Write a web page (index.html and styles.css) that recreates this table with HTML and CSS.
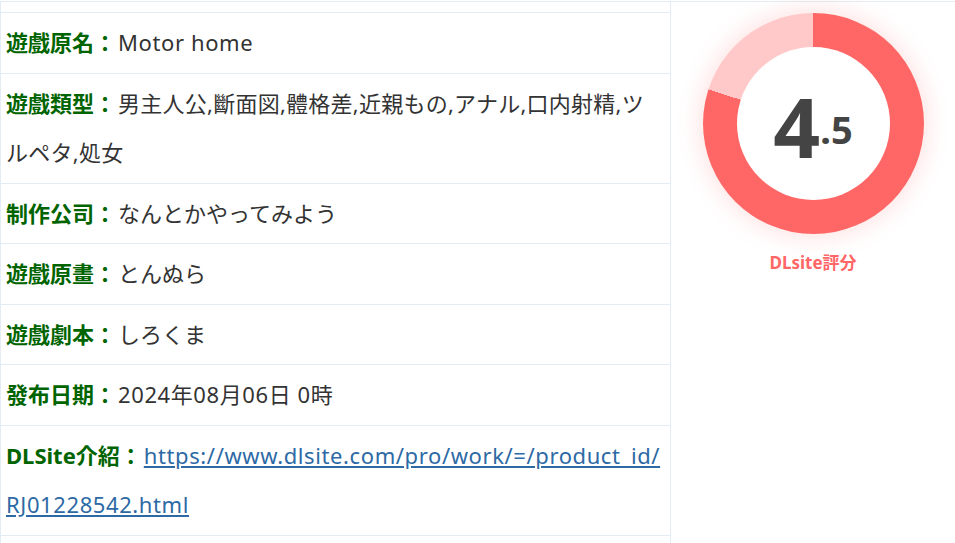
FILE: index.html
```html
<!DOCTYPE html>
<html lang="ja">
<head>
<meta charset="utf-8">
<link rel="stylesheet" href="styles.css">
</head>
<body>
<div class="info">
  <div class="details">
    <div class="stub"></div>
    <div class="row"><span class="label">遊戲原名：</span><span class="latin">Motor home</span></div>
    <div class="row"><span class="label">遊戲類型：</span><span class="tags">男主人公,斷面図,體格差,近親もの,アナル,口内射精,ツルペタ,処女</span></div>
    <div class="row"><span class="label">制作公司：</span>なんとかやってみよう</div>
    <div class="row"><span class="label">遊戲原畫：</span>とんぬら</div>
    <div class="row"><span class="label">遊戲劇本：</span>しろくま</div>
    <div class="row"><span class="label">發布日期：</span><span class="latin">2024年08月06日 0時</span></div>
    <div class="row"><span class="label">DLSite介紹：</span><a class="link latin" href="#">https://www.dlsite.com/pro/work/=/product_id/<wbr>RJ01228542.html</a></div>
    <div class="row"></div>
  </div>
  <div class="rating">
    <div class="donut">
      <div class="hole"><span class="score"><span class="big">4</span><span class="small">.5</span></span></div>
    </div>
    <div class="rating-label">DLsite評分</div>
  </div>
</div>
</body>
</html>
```
FILE: styles.css
```css
html, body {
  margin: 0;
  padding: 0;
  background: #fff;
}
body {
  font-family: "Noto Sans", "Noto Sans CJK SC", sans-serif;
  color: #333;
  overflow: hidden;
}
.info {
  margin-top: 1px;
  border-top: 1px solid #e3ecf4;
  display: grid;
  grid-template-columns: 671px 1fr;
}
.details {
  border-left: 1px solid #e3ecf4;
  border-right: 1px solid #e3ecf4;
}
.stub {
  height: 10px;
  border-bottom: 1px solid #e3ecf4;
}
.row {
  padding: 5px 5px;
  font-size: 22px;
  line-height: 49.5px;
  border-bottom: 1px solid #e3ecf4;
  min-height: 49.5px;
}
.label {
  color: #006400;
  font-weight: bold;
  margin-right: 2px;
}
.latin {
  letter-spacing: 0.6px;
}
.tags {
  letter-spacing: 0.25px;
}
.link {
  color: #2d6aa5;
  text-decoration: underline;
}
.rating {
  display: flex;
  flex-direction: column;
  align-items: center;
  padding-top: 11px;
}
.donut {
  width: 221px;
  height: 221px;
  border-radius: 50%;
  background: conic-gradient(#ff6666 0deg 288deg, #ffc9c9 288deg 360deg);
  box-shadow: 0 0 22px 4px rgba(255, 102, 102, 0.18);
  display: flex;
  align-items: center;
  justify-content: center;
}
.hole {
  width: 153px;
  height: 153px;
  border-radius: 50%;
  background: #fff;
  display: flex;
  align-items: center;
  justify-content: center;
}
.score {
  font-family: "Noto Sans", sans-serif;
  font-weight: bold;
  color: #444;
  line-height: 1;
  margin-top: 4px;
}
.big {
  font-size: 82px;
}
.small {
  font-size: 38px;
  vertical-align: 14px;
}
.rating-label {
  margin-top: 15px;
  font-size: 17px;
  font-weight: bold;
  color: #ff6666;
  font-family: "Noto Sans", "Noto Sans CJK SC", sans-serif;
}
```
